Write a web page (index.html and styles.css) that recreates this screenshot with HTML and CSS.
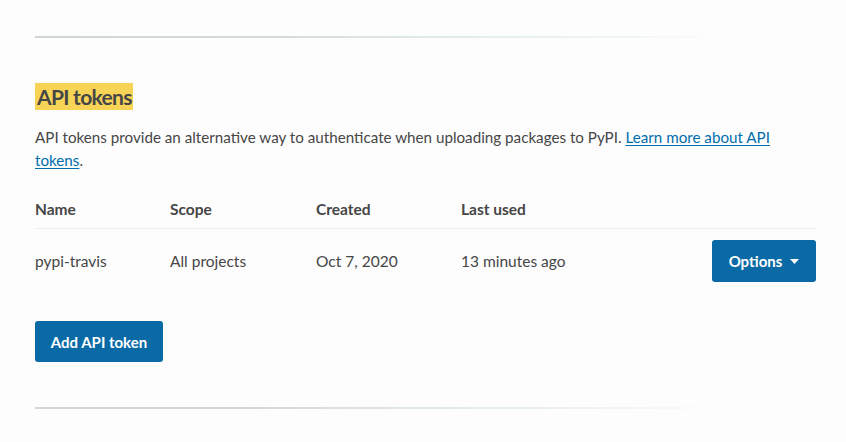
FILE: index.html
```html
<!DOCTYPE html>
<html>
<head>
<meta charset="utf-8">
<link rel="stylesheet" href="styles.css">
</head>
<body>
<div class="page">
  <hr class="sep sep-top">
  <section class="tokens">
    <h2 class="title"><span class="hl">API tokens</span></h2>
    <p class="intro">API tokens provide an alternative way to authenticate when uploading packages to PyPI. <a href="#">Learn more about API tokens</a>.</p>
    <div class="table">
      <div class="row head">
        <div>Name</div><div>Scope</div><div>Created</div><div>Last used</div><div></div>
      </div>
      <div class="row body">
        <div>pypi-travis</div><div>All projects</div><div>Oct 7, 2020</div><div>13 minutes ago</div>
        <div class="act"><button class="btn">Options <svg class="caret" width="9" height="5" viewBox="0 0 9 5"><path d="M0 0h9L4.5 5z" fill="#fff"/></svg></button></div>
      </div>
    </div>
    <button class="btn add">Add API token</button>
  </section>
  <hr class="sep sep-bottom">
</div>
</body>
</html>
```
FILE: styles.css
```css
html, body { margin: 0; padding: 0; background: #fdfdfd; }
body { font-family: Lato, "Liberation Sans", sans-serif; color: #464646; font-size: 15.5px; }
.page { padding: 36px 30px 0 35px; }
.sep {
  border: 0; height: 2px; margin: 0; width: 685px;
  background: linear-gradient(to right, #d0d5d5 0%, #d2d7d7 30%, #e2ecee 62%, #eef5f6 85%, #fdfdfd 100%);
}
.tokens { padding-top: 45px; padding-bottom: 45px; }
.title { margin: 0; font-size: 21px; font-weight: 700; line-height: 27px; height: 28px; }
.hl { display: inline-block; background: #f8d456; padding: 0 1px 0 2px; line-height: 27px; letter-spacing: -0.7px; }
.intro { margin: 15px 0 0; line-height: 23px; font-size: 15.2px; }
.intro a { color: #006dad; text-decoration: underline; text-underline-offset: 2px; }
.table { margin-top: 17px; width: 781px; }
.row { display: grid; grid-template-columns: 135px 146px 145px 1fr auto; align-items: center; }
.head { font-weight: 700; height: 39px; border-bottom: 1px solid #e6eeef; }
.body { height: 64px; }
.btn {
  font-family: inherit; font-weight: 700; font-size: 15px; color: #fff;
  background: #0a6aa6; border: 0; border-radius: 3px; cursor: pointer;
}
.act .btn { width: 104px; height: 42px; display: flex; align-items: center; justify-content: center; gap: 8px; }
.caret { display: block; }
.add { margin-top: 28px; width: 128px; height: 41px; }
```
